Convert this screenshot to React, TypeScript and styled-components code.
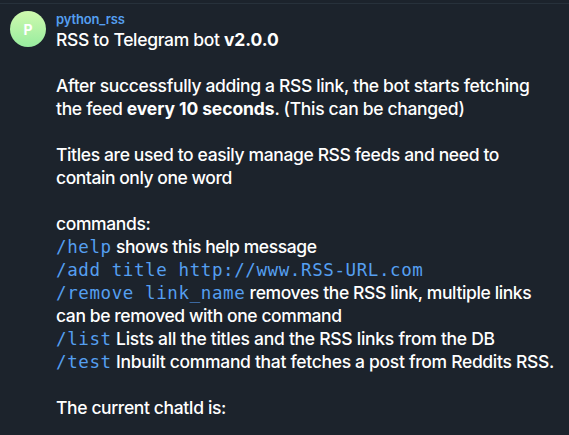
import React from "react";
import styled, { createGlobalStyle } from "styled-components";

const GlobalStyle = createGlobalStyle`
  * { box-sizing: border-box; }
  html, body { margin: 0; background: #1c232c; }
  body { overflow: hidden; -webkit-font-smoothing: antialiased; }
`;

const Chat = styled.main`
  display: flex;
  gap: 10px;
  width: 569px;
  height: 435px;
  padding: 8px 0 0 10px;
  background: linear-gradient(#27313b, #27313b) 0 3px / 100% 1px no-repeat #1c232c;
  color: #fff;
  font-family: Inter, sans-serif;
`;

const Avatar = styled.div`
  display: grid;
  place-items: center;
  flex: none;
  width: 36px;
  height: 36px;
  margin-top: 3px;
  border-radius: 50%;
  background: linear-gradient(#cffaae, #98ec9f);
  font: 700 14px/38px Inter, sans-serif;
`;

const Message = styled.article`
  flex: 1;
`;

const Sender = styled.div`
  height: 20px;
  color: #559ff0;
  font-size: 13px;
  font-weight: 600;
  line-height: 23px;
  letter-spacing: -0.15px;
`;

const Line = styled.div<{ $spacing?: number }>`
  height: 23px;
  font-size: 17.5px;
  font-weight: 500;
  line-height: 23px;
  letter-spacing: ${(p) => p.$spacing ?? -0.38}px;
  white-space: pre;
`;

const Strong = styled.strong`
  font-weight: 700;
  letter-spacing: -0.1px;
`;

const Command = styled.code`
  color: #559ff0;
  font-family: "DejaVu Sans Mono", monospace;
  font-size: 17.5px;
  font-weight: 400;
  line-height: 1;
  letter-spacing: 0.6px;
`;

export default function App() {
  return (
    <>
      <GlobalStyle />
      <Chat>
        <Avatar>P</Avatar>
        <Message>
          <Sender>python_rss</Sender>
          <Line $spacing={-0.32}>RSS to Telegram bot <Strong>v2.0.0</Strong></Line>
          <Line />
          <Line $spacing={-0.345}>After successfully adding a RSS link, the bot starts fetching</Line>
          <Line $spacing={-0.32}>the feed <Strong>every 10 seconds</Strong>. (This can be changed)</Line>
          <Line />
          <Line $spacing={-0.37}>Titles are used to easily manage RSS feeds and need to</Line>
          <Line $spacing={-0.45}>contain only one word</Line>
          <Line />
          <Line>commands:</Line>
          <Line $spacing={-0.42}><Command>/help</Command> shows this help message</Line>
          <Line><Command>/add title http://www.RSS-URL.com</Command></Line>
          <Line><Command>/remove link_name</Command> removes the RSS link, multiple links</Line>
          <Line $spacing={-0.41}>can be removed with one command</Line>
          <Line $spacing={-0.27}><Command>/list</Command> Lists all the titles and the RSS links from the DB</Line>
          <Line $spacing={-0.32}><Command>/test</Command> Inbuilt command that fetches a post from Reddits RSS.</Line>
          <Line />
          <Line>The current chatId is:</Line>
        </Message>
      </Chat>
    </>
  );
}
